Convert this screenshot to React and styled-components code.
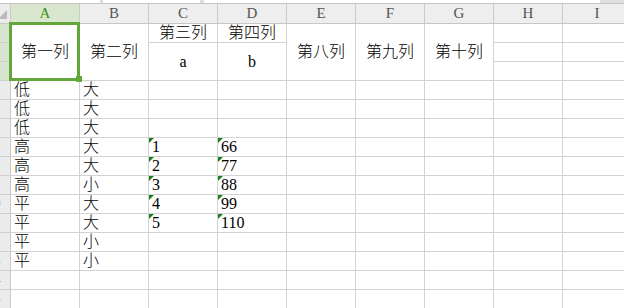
import styled, { createGlobalStyle } from "styled-components";

const GlobalStyle = createGlobalStyle`
  *, *::before, *::after { box-sizing: border-box; }
  html, body {
    margin: 0;
    padding: 0;
    background: #fff;
    overflow: hidden;
  }
`;

const Screen = styled.div`
  width: 624px;
  height: 308px;
  overflow: hidden;
  display: flex;
  flex-direction: column;
`;

const TopStrip = styled.div`
  flex: none;
  height: 4px;
  display: flex;
  background: #dedede;
  border-bottom: 1px solid #c6c6c6;
`;

const StripBox = styled.div`
  flex: none;
  width: ${(p) => p.$w}px;
  margin-right: ${(p) => p.$gap || 0}px;
  background: #fff;
`;

const Sheet = styled.div`
  display: grid;
  grid-template-columns: 11px repeat(9, 69px);
  grid-template-rows: 20px repeat(15, 19px);
`;

const Corner = styled.div`
  background: #ececec;
  border-right: 1px solid #c9c9c9;
  border-bottom: 1px solid #c9c9c9;
  overflow: hidden;
`;

const ColHead = styled.div`
  display: flex;
  align-items: center;
  justify-content: center;
  font-family: "Liberation Serif", serif;
  font-size: 15px;
  color: ${(p) => (p.$active ? "#3f8f22" : "#555")};
  background: ${(p) => (p.$active ? "#d8e7cd" : "#eeeeee")};
  border-right: 1px solid #cbcbcb;
  border-bottom: 1px solid #c6c6c6;
`;

const RowHead = styled.div`
  grid-column: 1;
  grid-row: ${(p) => p.$row + 1};
  display: flex;
  justify-content: flex-end;
  align-items: center;
  overflow: hidden;
  background: ${(p) => (p.$active ? "#d8e5cf" : "#ececec")};
  border-right: 1px solid #c9c9c9;
  border-bottom: 1px solid #cfcfcf;
`;

const RowNum = styled.span`
  flex: none;
  width: 33px;
  text-align: center;
  font-family: "Liberation Serif", serif;
  font-size: 14px;
  color: #555;
`;

const Cell = styled.div`
  position: relative;
  grid-column: ${(p) => p.$col + 2};
  grid-row: ${(p) => p.$row + 1} / span ${(p) => p.$span || 1};
  display: flex;
  align-items: ${(p) => (p.$middle ? "center" : "flex-end")};
  justify-content: ${(p) => (p.$centered ? "center" : "flex-start")};
  padding: 0 0 0 ${(p) => (p.$centered ? 0 : 3)}px;
  border-right: 1px solid #d2d2d2;
  border-bottom: 1px solid #d2d2d2;
  font-family: "Liberation Serif", "Noto Sans CJK SC", serif;
  font-size: 16px;
  font-weight: 300;
  line-height: 18px;
  color: #000;
  white-space: nowrap;

  ${(p) =>
    p.$flag &&
    `
    &::before {
      content: "";
      position: absolute;
      left: 0;
      top: 0;
      width: 0;
      height: 0;
      border-top: 5px solid #17801a;
      border-right: 5px solid transparent;
    }
  `}

  ${(p) =>
    p.$selected &&
    `
    z-index: 2;
    &::after {
      content: "";
      position: absolute;
      inset: -2px -1px -1px -2px;
      border: 3px solid #62a63c;
      pointer-events: none;
    }
  `}
`;

const FillHandle = styled.span`
  position: absolute;
  right: -3px;
  bottom: -2px;
  width: 6px;
  height: 6px;
  background: #62a63c;
  z-index: 3;
`;

const columns = ["A", "B", "C", "D", "E", "F", "G", "H", "I"];

const titleCells = [
  { col: 0, row: 1, span: 3, text: "第一列", selected: true },
  { col: 1, row: 1, span: 3, text: "第二列" },
  { col: 2, row: 1, text: "第三列", bottom: true },
  { col: 3, row: 1, text: "第四列", bottom: true },
  { col: 2, row: 2, span: 2, text: "a" },
  { col: 3, row: 2, span: 2, text: "b" },
  { col: 4, row: 1, span: 3, text: "第八列" },
  { col: 5, row: 1, span: 3, text: "第九列" },
  { col: 6, row: 1, span: 3, text: "第十列" },
  { col: 7, row: 1 },
  { col: 7, row: 2 },
  { col: 7, row: 3 },
  { col: 8, row: 1 },
  { col: 8, row: 2 },
  { col: 8, row: 3 },
];

const rows = [
  ["低", "大"],
  ["低", "大"],
  ["低", "大"],
  ["高", "大", "1", "66"],
  ["高", "大", "2", "77"],
  ["高", "小", "3", "88"],
  ["平", "大", "4", "99"],
  ["平", "大", "5", "110"],
  ["平", "小"],
  ["平", "小"],
  [],
  [],
];

export default function App() {
  return (
    <Screen>
      <GlobalStyle />
      <TopStrip>
        <StripBox $w={100} $gap={3} />
        <StripBox $w={97} $gap={4} />
        <StripBox $w={396} />
      </TopStrip>
      <Sheet>
        <Corner>
          <svg width="11" height="20" viewBox="0 0 11 20">
            <polygon points="7,6 7,15 -2,15" fill="#bababa" />
          </svg>
        </Corner>
        {columns.map((c, i) => (
          <ColHead key={c} $active={i === 0}>
            {c}
          </ColHead>
        ))}

        {Array.from({ length: 15 }, (_, i) => (
          <RowHead key={"rh" + i} $row={i + 1} $active={i < 3}>
            <RowNum>{i + 1}</RowNum>
          </RowHead>
        ))}

        {titleCells.map((t) => (
          <Cell
            key={`t${t.col}-${t.row}`}
            $col={t.col}
            $row={t.row}
            $span={t.span}
            $centered
            $middle={!t.bottom}
            $selected={t.selected}
          >
            {t.text}
            {t.selected && <FillHandle />}
          </Cell>
        ))}

        {rows.map((r, ri) =>
          columns.map((_, ci) => (
            <Cell
              key={`c${ri}-${ci}`}
              $col={ci}
              $row={ri + 4}
              $flag={(ci === 2 || ci === 3) && r[ci] !== undefined}
            >
              {r[ci]}
            </Cell>
          ))
        )}
      </Sheet>
    </Screen>
  );
}
